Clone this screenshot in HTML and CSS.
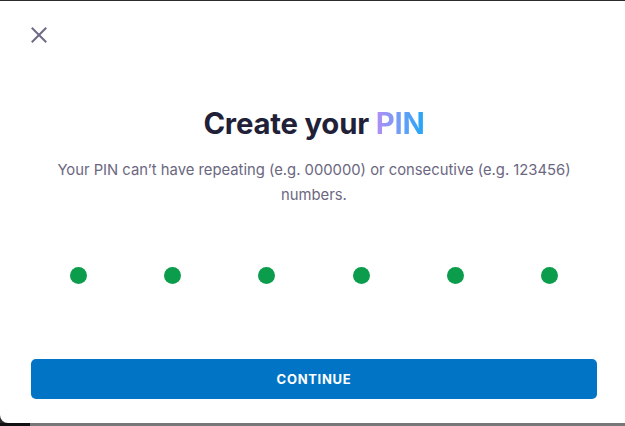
FILE: index.html
```html
<!DOCTYPE html>
<html>
<head>
<meta charset="utf-8">
<link rel="stylesheet" href="styles.css">
</head>
<body>
<div class="modal">
  <button class="close" aria-label="Close">
    <svg width="16" height="16" viewBox="0 0 16 16"><path d="M1.5 1.5 L14.5 14.5 M14.5 1.5 L1.5 14.5" stroke="#6e6a86" stroke-width="2" stroke-linecap="square" fill="none"/></svg>
  </button>
  <h1 class="title">Create your <span class="pin">PIN</span></h1>
  <p class="subtitle">Your PIN can’t have repeating (e.g. 000000) or consecutive (e.g. 123456) numbers.</p>
  <div class="dots">
    <span class="dot"></span><span class="dot"></span><span class="dot"></span><span class="dot"></span><span class="dot"></span><span class="dot"></span>
  </div>
  <button class="continue">CONTINUE</button>
</div>
<div class="bottom"></div>
</body>
</html>
```
FILE: styles.css
```css
html, body {
  margin: 0;
  padding: 0;
  width: 625px;
  height: 426px;
  overflow: hidden;
  background: #2d2d2d;
  font-family: Inter, "Liberation Sans", sans-serif;
}
.modal {
  margin-top: 1px;
  height: 422px;
  background: #ffffff;
  border-bottom-left-radius: 8px;
  padding: 0 28px 0 31px;
  box-sizing: border-box;
  display: flex;
  flex-direction: column;
}
.close {
  align-self: flex-start;
  margin-top: 26px;
  padding: 0;
  border: 0;
  background: none;
  width: 16px;
  height: 16px;
  display: flex;
}
.title {
  margin: 63px 0 0;
  text-align: center;
  font-size: 29.3px;
  line-height: 36px;
  font-weight: 700;
  color: #221f38;
  letter-spacing: -0.2px;
}
.pin {
  background: linear-gradient(90deg, #b18df6 0%, #6f9ef7 50%, #1fa6f6 100%);
  -webkit-background-clip: text;
  background-clip: text;
  color: transparent;
}
.subtitle {
  margin: 16px 0 0;
  text-align: center;
  font-size: 14.8px;
  line-height: 25px;
  color: #6b6781;
  padding: 0 20px;
}
.dots {
  margin-top: 59px;
  display: flex;
  justify-content: space-around;
}
.dot {
  width: 17px;
  height: 17px;
  border-radius: 50%;
  background: #0b9c4c;
}
.continue {
  margin-top: 75px;
  height: 40px;
  border: 0;
  border-radius: 5px;
  background: #0274c6;
  color: #ffffff;
  font-family: Inter, "Liberation Sans", sans-serif;
  font-weight: 700;
  font-size: 13px;
  letter-spacing: 0.7px;
}
.bottom {
  height: 3px;
  background: linear-gradient(90deg, #111 0 30px, #777 30px 100%);
}
```
